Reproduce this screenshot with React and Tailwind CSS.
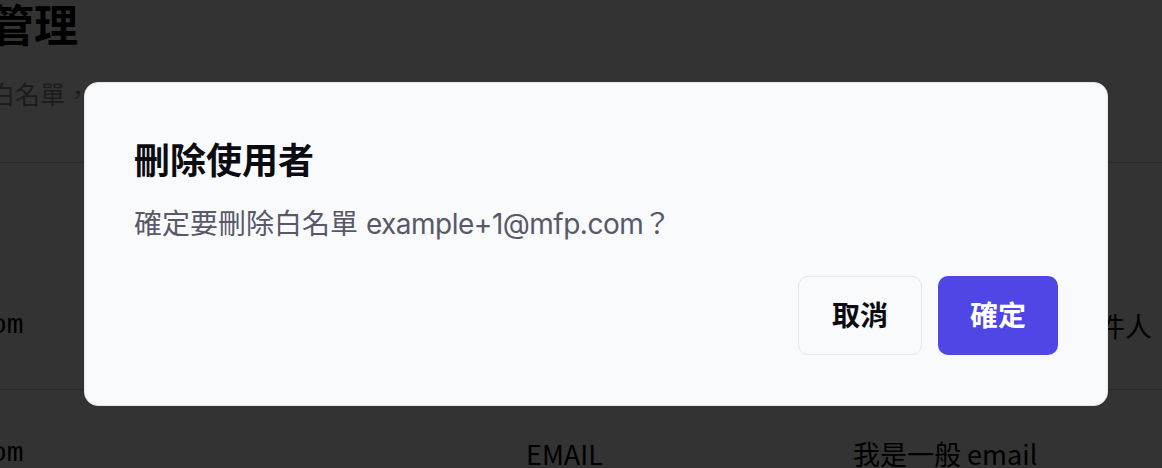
export default function App() {
  return (
    <div className="relative w-[1162px] h-[468px] overflow-hidden bg-white font-['Noto_Sans_CJK_TC',sans-serif]">
      {/* Underlying page */}
      <div className="ml-[-10px]">
        <h1 className="ml-[-132px] whitespace-nowrap text-[44px] leading-[46px] font-bold text-black">
          白名單管理
        </h1>
        <p className="mt-[29px] whitespace-nowrap text-[25px] leading-[36px] text-[#8c8c8c]">
          白名單，只有在白名單內的使用者才能登入並使用本系統的功能。
        </p>
      </div>
      <div className="mt-[51px] ml-[-262px] w-[1500px]">
        <div className="grid grid-cols-[789px_328px_1fr] border-t border-[#d1d5db] h-[227px] items-end pb-[45px] text-[27px] leading-[36px] text-black">
          <div className="font-['Liberation_Mono',monospace] text-[28px]">example+1@mfp.com</div>
          <div>EMAIL</div>
          <div className="whitespace-nowrap">這是測試用的範例寄件人</div>
        </div>
        <div className="grid grid-cols-[789px_328px_1fr] border-t border-[#d1d5db] pt-[46px] text-[27px] leading-[36px] text-black">
          <div className="font-['Liberation_Mono',monospace] text-[28px]">example+2@mfp.com</div>
          <div className="-ml-px">EMAIL</div>
          <div className="-ml-[2px] whitespace-nowrap">我是一般 email</div>
        </div>
      </div>

      {/* Overlay */}
      <div className="absolute inset-0 bg-black/80" />

      {/* Dialog */}
      <div className="absolute left-[84px] top-[82px] w-[1024px] h-[324px] rounded-[14px] border border-[#e5e7eb] bg-[#f9fafb] pt-[56px] px-[49px] pb-[50px] flex flex-col font-[Inter,'Noto_Sans_CJK_TC',sans-serif]">
        <h2 className="text-[36px] leading-[44px] font-bold text-[#0b0b12]">刪除使用者</h2>
        <p className="mt-[21px] text-[28px] leading-[40px] text-[#585869]">
          確定要刪除白名單 <span className="tracking-[-0.5px]">example+1@mfp.com</span>？
        </p>
        <div className="mt-auto flex justify-end gap-4">
          <button className="w-[124px] h-[79px] rounded-[10px] border border-[#e5e7eb] bg-[#f9fafb] text-[28px] font-bold text-[#0b0b12]">
            取消
          </button>
          <button className="w-[120px] h-[79px] rounded-[10px] bg-[#4f46e5] text-[28px] font-bold text-white">
            確定
          </button>
        </div>
      </div>
    </div>
  );
}
